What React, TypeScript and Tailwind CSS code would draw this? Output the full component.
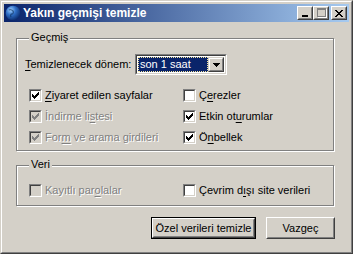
import React from "react";

const font = { fontFamily: '"Liberation Sans", Tahoma, Arial, sans-serif' };

function Key({ children }: { children: React.ReactNode }) {
  return <span className="underline underline-offset-[2px] decoration-[1px]">{children}</span>;
}

function CheckMark({ color }: { color: string }) {
  // classic 7x7 tick
  const px: [number, number][] = [
    [6, 0], [5, 1], [6, 1], [0, 2], [4, 2], [5, 2], [6, 2],
    [0, 3], [1, 3], [3, 3], [4, 3], [5, 3], [0, 4], [1, 4], [2, 4], [3, 4], [4, 4],
    [1, 5], [2, 5], [3, 5], [2, 6],
  ];
  return (
    <svg width="7" height="7" viewBox="0 0 7 7" shapeRendering="crispEdges">
      {px.map(([x, y]) => (
        <rect key={x + "-" + y} x={x} y={y} width="1" height="1" fill={color} />
      ))}
    </svg>
  );
}

function Check({ checked, disabled }: { checked?: boolean; disabled?: boolean }) {
  return (
    <span className="w-[13px] h-[13px] shrink-0 border border-t-[#808080] border-l-[#808080] border-b-white border-r-white flex">
      <span
        className={
          "flex-1 border border-t-[#404040] border-l-[#404040] border-b-[#d4d0c8] border-r-[#d4d0c8] flex items-center justify-center " +
          (disabled ? "bg-[#d4d0c8]" : "bg-white")
        }
      >
        {checked && <CheckMark color={disabled ? "#808080" : "#000"} />}
      </span>
    </span>
  );
}

function Option({ label, checked, disabled }: { label: React.ReactNode; checked?: boolean; disabled?: boolean }) {
  return (
    <div className="h-[21px] flex items-center gap-[3px]">
      <Check checked={checked} disabled={disabled} />
      <span className={disabled ? "text-[#808080] [text-shadow:1px_1px_0_#fff]" : "text-black"}>{label}</span>
    </div>
  );
}

function Group({ title, className, children }: { title: string; className: string; children: React.ReactNode }) {
  return (
    <div className={"relative w-[318px] border border-[#808080] shadow-[inset_1px_1px_0_#fff,1px_1px_0_#fff] " + className}>
      <span className="absolute left-[12px] -top-[8px] px-[2px] bg-[#d4d0c8] leading-[13px]">{title}</span>
      {children}
    </div>
  );
}

function CapButton({ children }: { children: React.ReactNode }) {
  return (
    <div className="w-[16px] h-[14px] bg-[#d4d0c8] border border-t-white border-l-white border-b-[#404040] border-r-[#404040]">
      <div className="w-full h-full border border-t-[#d4d0c8] border-l-[#d4d0c8] border-b-[#808080] border-r-[#808080] flex items-center justify-center">
        {children}
      </div>
    </div>
  );
}

function PushButton({ children, isDefault, className }: { children: React.ReactNode; isDefault?: boolean; className: string }) {
  return (
    <div className={"h-[22px] " + (isDefault ? "border border-black " : "") + className}>
      <div className="w-full h-full bg-[#d4d0c8] border border-t-white border-l-white border-b-[#404040] border-r-[#404040]">
        <div className="w-full h-full border border-t-[#d4d0c8] border-l-[#d4d0c8] border-b-[#808080] border-r-[#808080] flex items-center justify-center">
          {children}
        </div>
      </div>
    </div>
  );
}

export default function App() {
  return (
    <div className="w-[353px] h-[254px] text-[11px] leading-[13px] bg-[#d4d0c8] border border-t-[#d4d0c8] border-l-[#d4d0c8] border-b-[#404040] border-r-[#404040]" style={font}>
      <div className="w-full h-full border border-t-white border-l-white border-b-[#808080] border-r-[#808080] p-[2px] flex flex-col">
        {/* title bar */}
        <div className="h-[18px] shrink-0 flex items-center bg-[linear-gradient(to_right,#0a246a,#a6caf0)] pl-[1px] pr-[2px]">
          <svg width="16" height="16" viewBox="0 0 16 16">
            <defs>
              <radialGradient id="g" cx="0.35" cy="0.3" r="0.75">
                <stop offset="0" stopColor="#9fd0ff" />
                <stop offset="0.45" stopColor="#2f6fc6" />
                <stop offset="1" stopColor="#0b2a6a" />
              </radialGradient>
            </defs>
            <circle cx="8" cy="8" r="7.3" fill="url(#g)" />
            <path d="M4 5c2-1 3 0 4 1s0 3-1 3-2 1-1 3" stroke="#0b2f5a" strokeWidth="1.3" fill="none" opacity="0.6" />
          </svg>
          <span className="ml-[2px] font-bold text-white text-[12px]">Yakın geçmişi temizle</span>
          <div className="flex-1" />
          <CapButton>
            <span className="w-[6px] h-[2px] bg-black mt-[5px] -ml-[1px]" />
          </CapButton>
          <CapButton>
            <span className="w-[9px] h-[9px] border border-t-2 border-[#808080] shadow-[1px_1px_0_#fff] -mt-[1px]" />
          </CapButton>
          <div className="w-[2px]" />
          <CapButton>
            <svg width="8" height="7" viewBox="0 0 8 7" shapeRendering="crispEdges">
              <path d="M0 0h2v1h-2zM6 0h2v1h-2zM1 1h2v1h-2zM5 1h2v1h-2zM2 2h4v1h-4zM3 3h2v1h-2zM2 4h4v1h-4zM1 5h2v1h-2zM5 5h2v1h-2zM0 6h2v1h-2zM6 6h2v1h-2z" fill="#000" />
            </svg>
          </CapButton>
        </div>

        {/* body */}
        <div className="flex-1 flex flex-col pl-[12px] pt-[16px]">
          <Group title="Geçmiş" className="h-[113px]">
            <div className="flex items-center pl-[8px] pt-[15px]">
              <span className="w-[110px]">
                <Key>T</Key>emizlenecek dönem:
              </span>
              <div className="w-[92px] h-[21px] border border-t-[#808080] border-l-[#808080] border-b-white border-r-white">
                <div className="w-full h-full bg-white border border-t-[#404040] border-l-[#404040] border-b-[#d4d0c8] border-r-[#d4d0c8] flex p-[1px]">
                  <div className="flex-1 bg-[#0a246a] text-white flex items-center border border-dotted border-[#f5e6a0] pl-[1px]">
                    son 1 saat
                  </div>
                  <div className="w-[16px] bg-[#d4d0c8] border border-t-[#d4d0c8] border-l-[#d4d0c8] border-b-[#404040] border-r-[#404040]">
                    <div className="w-full h-full border border-t-white border-l-white border-b-[#808080] border-r-[#808080] flex items-center justify-center">
                      <svg width="7" height="4" viewBox="0 0 7 4" shapeRendering="crispEdges">
                        <path d="M0 0h7v1h-7zM1 1h5v1h-5zM2 2h3v1h-3zM3 3h1v1h-1z" fill="#000" />
                      </svg>
                    </div>
                  </div>
                </div>
              </div>
            </div>
            <div className="grid grid-cols-[154px_1fr] pl-[12px] pt-[10px]">
              <Option checked label={<><Key>Z</Key>iyaret edilen sayfalar</>} />
              <Option label={<>Ç<Key>e</Key>rezler</>} />
              <Option checked disabled label={<>İndirme li<Key>s</Key>tesi</>} />
              <Option checked label={<>Etkin ot<Key>u</Key>rumlar</>} />
              <Option checked disabled label={<>For<Key>m</Key> ve arama girdileri</>} />
              <Option checked label={<>Ö<Key>n</Key>bellek</>} />
            </div>
          </Group>

          <Group title="Veri" className="h-[41px] mt-[14px]">
            <div className="grid grid-cols-[154px_1fr] pl-[12px] pt-[14px]">
              <Option disabled label={<>Kayıtlı par<Key>o</Key>lalar</>} />
              <Option label={<>Çevrim d<Key>ı</Key>şı site verileri</>} />
            </div>
          </Group>

          <div className="flex justify-end gap-[10px] pr-[14px] mt-[11px]">
            <PushButton isDefault className="w-[105px]">Özel verileri temizle</PushButton>
            <PushButton className="w-[69px]">Vazgeç</PushButton>
          </div>
        </div>
      </div>
    </div>
  );
}
